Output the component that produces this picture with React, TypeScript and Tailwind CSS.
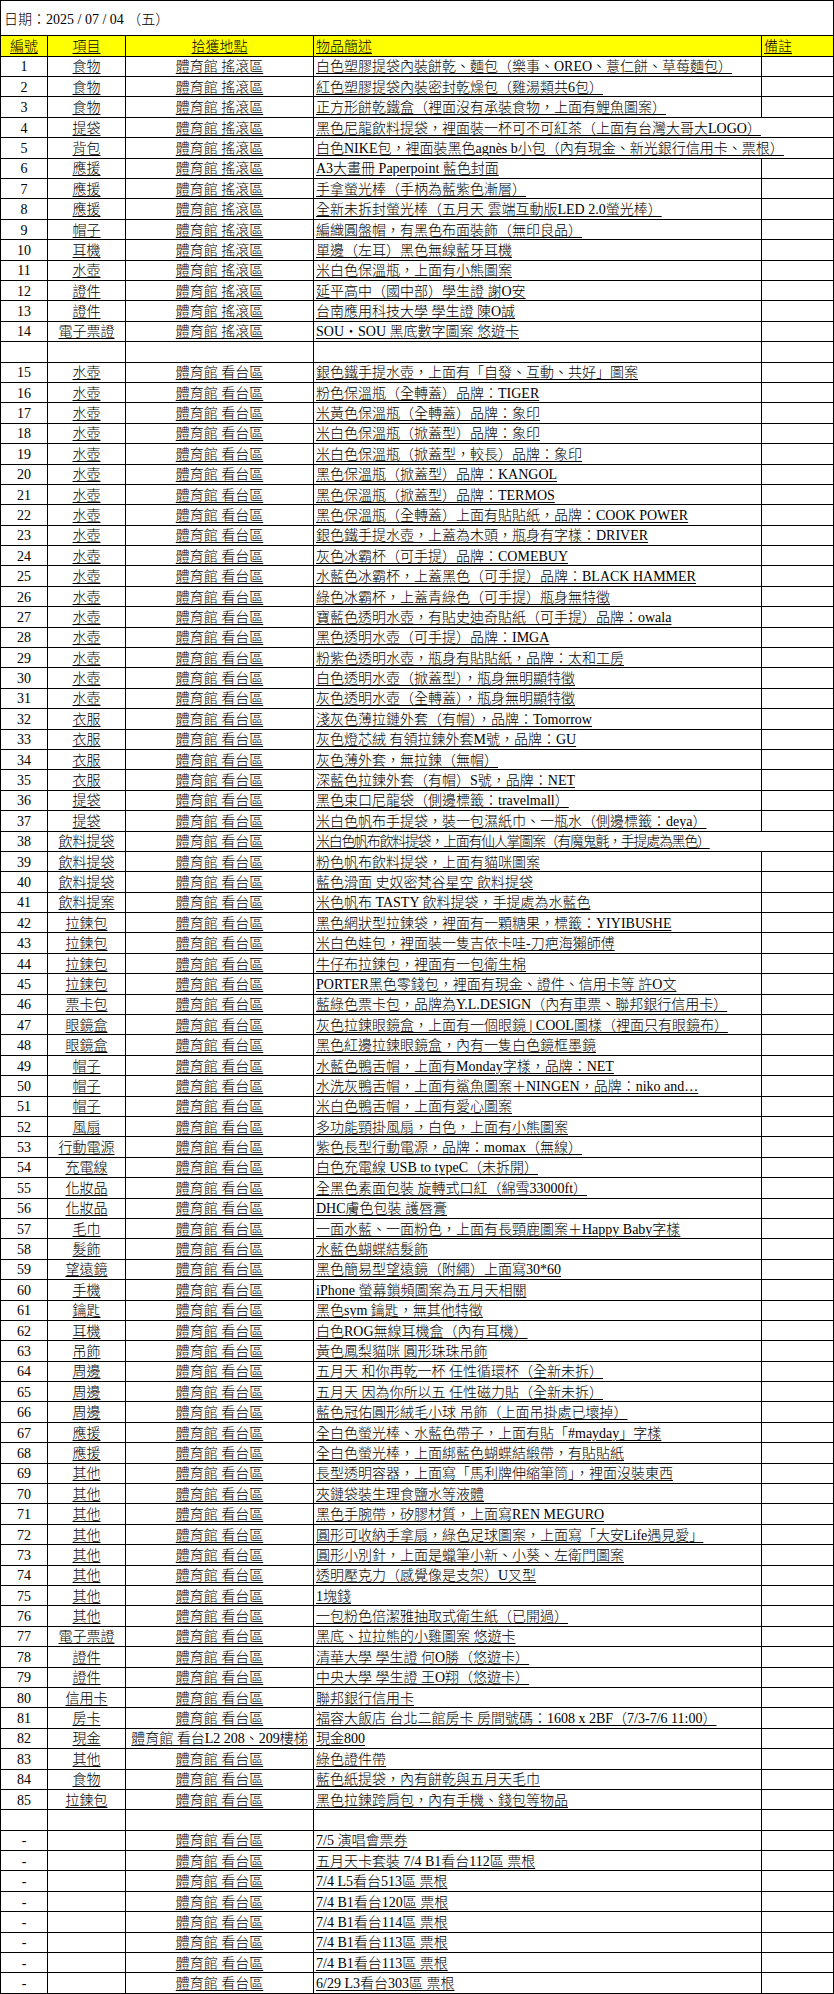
type LostItem = {
    no: string;
    item: string;
    place: string;
    desc: string;
    wide?: boolean;
    tight?: boolean;
};

const ROCK = '體育館 搖滾區';
const STAND = '體育館 看台區';

const rock: [string, string, boolean?][] = [
    ['食物', '白色塑膠提袋內裝餅乾、麵包（樂事、OREO、薏仁餅、草莓麵包）'],
    ['食物', '紅色塑膠提袋內裝密封乾燥包（雞湯類共6包）'],
    ['食物', '正方形餅乾鐵盒（裡面沒有承裝食物，上面有鯉魚圖案）'],
    ['提袋', '黑色尼龍飲料提袋，裡面裝一杯可不可紅茶（上面有台灣大哥大LOGO）', true],
    ['背包', '白色NIKE包，裡面裝黑色agnès b小包（內有現金、新光銀行信用卡、票根）', true],
    ['應援', 'A3大畫冊 Paperpoint 藍色封面'],
    ['應援', '手拿螢光棒（手柄為藍紫色漸層）'],
    ['應援', '全新未拆封螢光棒（五月天 雲端互動版LED 2.0螢光棒）'],
    ['帽子', '編織圓盤帽，有黑色布面裝飾（無印良品）'],
    ['耳機', '單邊（左耳）黑色無線藍牙耳機'],
    ['水壺', '米白色保溫瓶，上面有小熊圖案'],
    ['證件', '延平高中（國中部）學生證 謝O安'],
    ['證件', '台南應用科技大學 學生證 陳O誠'],
    ['電子票證', 'SOU・SOU 黑底數字圖案 悠遊卡'],
];

const stand: [string, string, boolean?][] = [
    ['水壺', '銀色鐵手提水壺，上面有「自發、互動、共好」圖案'],
    ['水壺', '粉色保溫瓶（全轉蓋）品牌：TIGER'],
    ['水壺', '米黃色保溫瓶（全轉蓋）品牌：象印'],
    ['水壺', '米白色保溫瓶（掀蓋型）品牌：象印'],
    ['水壺', '米白色保溫瓶（掀蓋型，較長）品牌：象印'],
    ['水壺', '黑色保溫瓶（掀蓋型）品牌：KANGOL'],
    ['水壺', '黑色保溫瓶（掀蓋型）品牌：TERMOS'],
    ['水壺', '黑色保溫瓶（全轉蓋）上面有貼貼紙，品牌：COOK POWER'],
    ['水壺', '銀色鐵手提水壺，上蓋為木頭，瓶身有字樣：DRIVER'],
    ['水壺', '灰色冰霸杯（可手提）品牌：COMEBUY'],
    ['水壺', '水藍色冰霸杯，上蓋黑色（可手提）品牌：BLACK HAMMER'],
    ['水壺', '綠色冰霸杯，上蓋青綠色（可手提）瓶身無特徵'],
    ['水壺', '寶藍色透明水壺，有貼史迪奇貼紙（可手提）品牌：owala'],
    ['水壺', '黑色透明水壺（可手提）品牌：IMGA'],
    ['水壺', '粉紫色透明水壺，瓶身有貼貼紙，品牌：太和工房'],
    ['水壺', '白色透明水壺（掀蓋型），瓶身無明顯特徵'],
    ['水壺', '灰色透明水壺（全轉蓋），瓶身無明顯特徵'],
    ['衣服', '淺灰色薄拉鏈外套（有帽），品牌：Tomorrow'],
    ['衣服', '灰色燈芯絨 有領拉鍊外套M號，品牌：GU'],
    ['衣服', '灰色薄外套，無拉鍊（無帽）'],
    ['衣服', '深藍色拉鍊外套（有帽）S號，品牌：NET'],
    ['提袋', '黑色束口尼龍袋（側邊標籤：travelmall）'],
    ['提袋', '米白色帆布手提袋，裝一包濕紙巾、一瓶水（側邊標籤：deya）'],
    ['飲料提袋', '米白色帆布飲料提袋，上面有仙人掌圖案（有魔鬼氈，手提處為黑色）', true],
    ['飲料提袋', '粉色帆布飲料提袋，上面有貓咪圖案'],
    ['飲料提袋', '藍色滑面 史奴密梵谷星空 飲料提袋'],
    ['飲料提案', '米色帆布 TASTY 飲料提袋，手提處為水藍色'],
    ['拉鍊包', '黑色網狀型拉鍊袋，裡面有一顆糖果，標籤：YIYIBUSHE'],
    ['拉鍊包', '米白色娃包，裡面裝一隻吉依卡哇-刀疤海獺師傅'],
    ['拉鍊包', '牛仔布拉鍊包，裡面有一包衛生棉'],
    ['拉鍊包', 'PORTER黑色零錢包，裡面有現金、證件、信用卡等 許O文'],
    ['票卡包', '藍綠色票卡包，品牌為Y.L.DESIGN（內有車票、聯邦銀行信用卡）'],
    ['眼鏡盒', '灰色拉鍊眼鏡盒，上面有一個眼鏡 | COOL圖樣（裡面只有眼鏡布）'],
    ['眼鏡盒', '黑色紅邊拉鍊眼鏡盒，內有一隻白色鏡框墨鏡'],
    ['帽子', '水藍色鴨舌帽，上面有Monday字樣，品牌：NET'],
    ['帽子', '水洗灰鴨舌帽，上面有鯊魚圖案＋NINGEN，品牌：niko and…'],
    ['帽子', '米白色鴨舌帽，上面有愛心圖案'],
    ['風扇', '多功能頸掛風扇，白色，上面有小熊圖案'],
    ['行動電源', '紫色長型行動電源，品牌：momax（無線）'],
    ['充電線', '白色充電線 USB to typeC（未拆開）'],
    ['化妝品', '全黑色素面包裝 旋轉式口紅（綿雪33000ft）'],
    ['化妝品', 'DHC膚色包裝 護唇膏'],
    ['毛巾', '一面水藍、一面粉色，上面有長頸鹿圖案＋Happy Baby字樣'],
    ['髮飾', '水藍色蝴蝶結髮飾'],
    ['望遠鏡', '黑色簡易型望遠鏡（附繩）上面寫30*60'],
    ['手機', 'iPhone 螢幕鎖頻圖案為五月天相關'],
    ['鑰匙', '黑色sym 鑰匙，無其他特徵'],
    ['耳機', '白色ROG無線耳機盒（內有耳機）'],
    ['吊飾', '黃色鳳梨貓咪 圓形珠珠吊飾'],
    ['周邊', '五月天 和你再乾一杯 任性循環杯（全新未拆）'],
    ['周邊', '五月天 因為你所以五 任性磁力貼（全新未拆）'],
    ['周邊', '藍色冠佑圓形絨毛小球 吊飾（上面吊掛處已壞掉）'],
    ['應援', '全白色螢光棒、水藍色帶子，上面有貼「#mayday」字樣'],
    ['應援', '全白色螢光棒，上面綁藍色蝴蝶結緞帶，有貼貼紙'],
    ['其他', '長型透明容器，上面寫「馬利牌伸縮筆筒」，裡面沒裝東西'],
    ['其他', '夾鏈袋裝生理食鹽水等液體'],
    ['其他', '黑色手腕帶，矽膠材質，上面寫REN MEGURO'],
    ['其他', '圓形可收納手拿扇，綠色足球圖案，上面寫「大安Life遇見愛」'],
    ['其他', '圓形小別針，上面是蠟筆小新、小葵、左衛門圖案'],
    ['其他', '透明壓克力（感覺像是支架）U叉型'],
    ['其他', '1塊錢'],
    ['其他', '一包粉色倍潔雅抽取式衛生紙（已開過）'],
    ['電子票證', '黑底、拉拉熊的小雞圖案 悠遊卡'],
    ['證件', '清華大學 學生證 何O勝（悠遊卡）'],
    ['證件', '中央大學 學生證 王O翔（悠遊卡）'],
    ['信用卡', '聯邦銀行信用卡'],
    ['房卡', '福容大飯店 台北二館房卡 房間號碼：1608 x 2BF（7/3-7/6 11:00）'],
    ['現金', '現金800'],
    ['其他', '綠色證件帶'],
    ['食物', '藍色紙提袋，內有餅乾與五月天毛巾'],
    ['拉鍊包', '黑色拉鍊跨肩包，內有手機、錢包等物品'],
];

const stubs = [
    '7/5 演唱會票券',
    '五月天卡套裝 7/4 B1看台112區 票根',
    '7/4 L5看台513區 票根',
    '7/4 B1看台120區 票根',
    '7/4 B1看台114區 票根',
    '7/4 B1看台113區 票根',
    '7/4 B1看台113區 票根',
    '6/29 L3看台303區 票根',
];

const rockRows: LostItem[] = rock.map(([item, desc, wide], i) => ({
    no: String(i + 1),
    item,
    place: ROCK,
    desc,
    wide,
}));

const standRows: LostItem[] = stand.map(([item, desc, wide], i) => ({
    no: String(i + 15),
    item,
    place: i + 15 === 82 ? '體育館 看台L2 208、209樓梯' : STAND,
    desc,
    wide,
    // row 38 is squeezed to end right at the remarks column
    tight: i + 15 === 38,
}));

const stubRows: LostItem[] = stubs.map((desc) => ({ no: '-', item: '', place: STAND, desc }));

const ROW = 'grid h-[20.4px] grid-cols-[47px_78px_188px_448px_1fr] border-b border-black';
const CELL = 'flex items-center overflow-visible whitespace-nowrap border-r border-black pt-[2px]';
const LINE = 'underline decoration-1 underline-offset-[2px]';

const Row = ({ row }: { row: LostItem }) => (
    <div className={ROW}>
        <div className={`${CELL} justify-center`}>{row.no}</div>
        <div className={`${CELL} justify-center`}>
            <span className={LINE}>{row.item}</span>
        </div>
        <div className={`${CELL} justify-center`}>
            <span className={LINE}>{row.place}</span>
        </div>
        <div className={`${CELL} pl-[2px] ${row.wide ? 'col-span-2 border-r-0' : ''}`}>
            <span className={`${LINE} ${row.tight ? 'tracking-[-1.3px]' : ''}`}>{row.desc}</span>
        </div>
        {!row.wide && <div />}
    </div>
);

const BlankRow = () => (
    <div className={ROW}>
        <div className="border-r border-black" />
        <div className="border-r border-black" />
        <div className="border-r border-black" />
        <div className="border-r border-black" />
        <div />
    </div>
);

const App = () => {
    return (
        <div className="min-h-[1994px] w-[834px] bg-white font-['Liberation_Serif','Noto_Sans_CJK_TC',serif] text-[14px] font-light leading-none text-black">
            <div className="border-x border-t border-black">
                <div className="flex h-[35px] items-center border-b border-black pl-[3px] pt-[4px]">
                    日期：2025 / 07 / 04 （五）
                </div>

                <div className="grid h-[20.7px] grid-cols-[47px_78px_188px_448px_1fr] border-b border-black bg-[#ffff00]">
                    <div className={`${CELL} justify-center`}>
                        <span className={LINE}>編號</span>
                    </div>
                    <div className={`${CELL} justify-center`}>
                        <span className={LINE}>項目</span>
                    </div>
                    <div className={`${CELL} justify-center`}>
                        <span className={LINE}>拾獲地點</span>
                    </div>
                    <div className={`${CELL} pl-[2px]`}>
                        <span className={LINE}>物品簡述</span>
                    </div>
                    <div className="flex items-center pl-[2px] pt-[2px]">
                        <span className={LINE}>備註</span>
                    </div>
                </div>

                {rockRows.map((row) => (
                    <Row key={row.no} row={row} />
                ))}
                <BlankRow />
                {standRows.map((row) => (
                    <Row key={row.no} row={row} />
                ))}
                <BlankRow />
                {stubRows.map((row, index) => (
                    <Row key={`stub-${index}`} row={row} />
                ))}
            </div>
        </div>
    );
};

export default App;
